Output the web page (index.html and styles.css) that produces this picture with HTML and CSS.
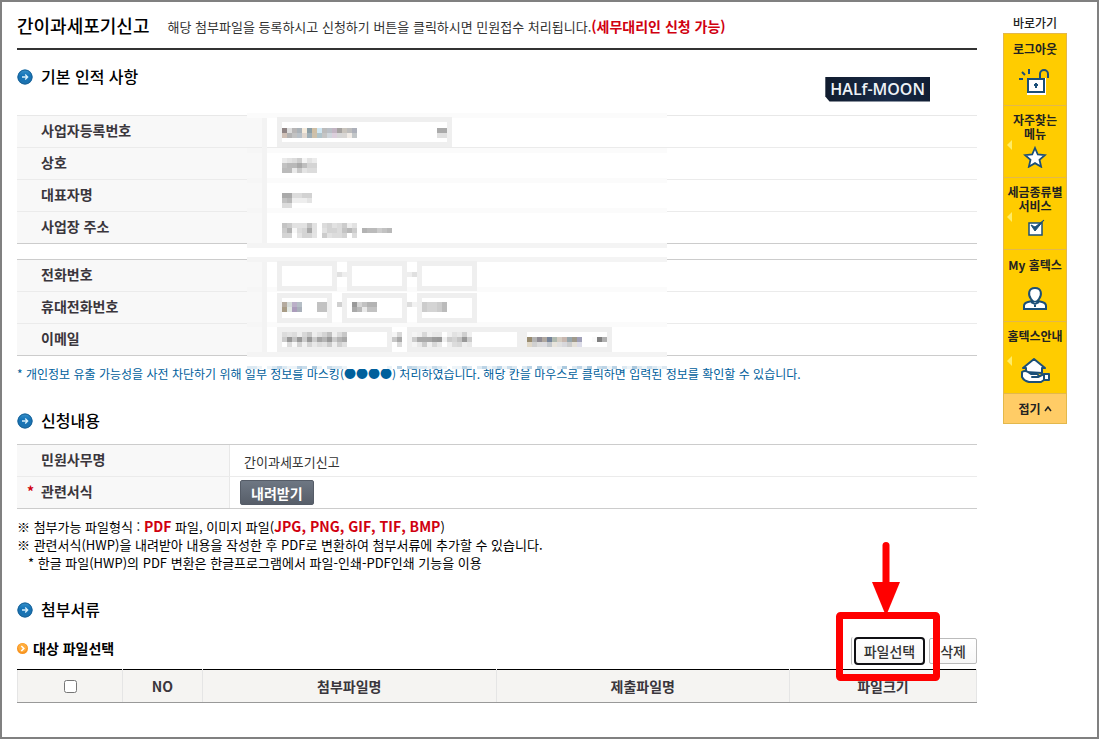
FILE: index.html
```html
<!DOCTYPE html>
<html lang="ko">
<head>
<meta charset="utf-8">
<title>간이과세포기신고</title>
<link rel="stylesheet" href="styles.css">
</head>
<body>
<svg class="defs" aria-hidden="true">
  <defs>
    <linearGradient id="blue" x1="0" y1="0" x2="0" y2="1"><stop offset="0" stop-color="#3a94cc"/><stop offset=".4" stop-color="#1574b8"/><stop offset="1" stop-color="#1d72ae"/></linearGradient>
    <symbol id="arrow" viewBox="0 0 16 16"><circle cx="8" cy="8" r="7.6" fill="url(#blue)"/><circle cx="8" cy="8" r="7" fill="none" stroke="#1c6296" stroke-width="1"/><path d="M5 8h5.5M8.2 5.5 10.7 8 8.2 10.5" fill="none" stroke="#d9f0fb" stroke-width="1.3"/></symbol>
  </defs>
</svg>
<div class="page">
  <main class="main">
    <header class="top">
      <h1>간이과세포기신고</h1>
      <p>해당 첨부파일을 등록하시고 신청하기 버튼을 클릭하시면 민원접수 처리됩니다.<strong>(세무대리인 신청 가능)</strong></p>
    </header>

    <div class="section-head">
      <svg class="bullet"><use href="#arrow"/></svg>
      <h2>기본 인적 사항</h2>
      <span class="brand">HALf-MOON</span>
    </div>

    <div class="form form-person">
      <svg class="mosaic" id="mask-person" width="420" height="135" viewBox="0 0 84 27" aria-hidden="true"></svg>
      <div class="row"><label class="label" for="bizno">사업자등록번호</label><div class="value"><select id="bizno" class="field w-175"></select></div></div>
      <div class="row"><span class="label">상호</span><div class="value"></div></div>
      <div class="row"><span class="label">대표자명</span><div class="value"></div></div>
      <div class="row"><span class="label">사업장 주소</span><div class="value"></div></div>
    </div>

    <div class="form form-contact">
      <svg class="mosaic" id="mask-contact" width="420" height="100" viewBox="0 0 84 20" aria-hidden="true"></svg>
      <div class="row"><label class="label" for="tel1">전화번호</label><div class="value phone"><input id="tel1" class="field w-60"><input class="field w-60" aria-label="전화번호 국번"><input class="field w-60" aria-label="전화번호 끝자리"></div></div>
      <div class="row"><label class="label" for="cell1">휴대전화번호</label><div class="value phone"><select id="cell1" class="field w-55"></select><input class="field w-65" aria-label="휴대전화번호 국번"><input class="field w-60" aria-label="휴대전화번호 끝자리"></div></div>
      <div class="row"><label class="label" for="mail1">이메일</label><div class="value mail"><input id="mail1" class="field w-115"><input class="field w-115" aria-label="이메일 도메인"><select class="field w-90" aria-label="이메일 도메인 선택"></select></div></div>
    </div>
    <p class="notice">* 개인정보 유출 가능성을 사전 차단하기 위해 일부 정보를 마스킹(●●●●) 처리하였습니다. 해당 칸을 마우스로 클릭하면 입력된 정보를 확인할 수 있습니다.
      <svg class="notice-mask" id="mask-notice" width="420" height="3" viewBox="0 0 84 1" preserveAspectRatio="none" aria-hidden="true"></svg></p>

    <div class="section-head spaced">
      <svg class="bullet"><use href="#arrow"/></svg>
      <h2>신청내용</h2>
    </div>
    <div class="form form-request">
      <div class="row"><span class="label">민원사무명</span><div class="value text">간이과세포기신고</div></div>
      <div class="row"><span class="label"><i class="req">*</i>관련서식</span><div class="value"><button class="download" type="button">내려받기</button></div></div>
    </div>
    <ul class="hints">
      <li>※ 첨부가능 파일형식 : <strong>PDF</strong> 파일, 이미지 파일(<strong>JPG, PNG, GIF, TIF, BMP</strong>)</li>
      <li>※ 관련서식(HWP)을 내려받아 내용을 작성한 후 PDF로 변환하여 첨부서류에 추가할 수 있습니다.</li>
      <li class="sub">* 한글 파일(HWP)의 PDF 변환은 한글프로그램에서 파일-인쇄-PDF인쇄 기능을 이용</li>
    </ul>

    <div class="section-head spaced">
      <svg class="bullet"><use href="#arrow"/></svg>
      <h2>첨부서류</h2>
    </div>
    <div class="toolbar">
      <h3><svg class="dot" viewBox="0 0 11 11"><circle cx="5.5" cy="5.5" r="5.5" fill="#f79421"/><circle cx="5.5" cy="4.6" r="4.3" fill="#ffac3b"/><path d="M4.3 3 6.8 5.5 4.3 8" fill="none" stroke="#fff" stroke-width="1.6"/></svg>대상 파일선택</h3>
      <span class="pick-wrap"><button class="btn pick" type="button">파일선택</button></span>
      <button class="btn" type="button">삭제</button>
      <svg class="marker" viewBox="0 0 106 142" aria-hidden="true"><rect x="4.5" y="75.5" width="97" height="62" rx="1" fill="none" stroke="#f00" stroke-width="7" stroke-linejoin="round"/><path d="M51 5.5V44" stroke="#f00" stroke-width="7" stroke-linecap="round"/><path d="M37 42h28L51 76z" fill="#f00"/></svg>
    </div>
    <table class="files">
      <colgroup><col class="c-check"><col class="c-no"><col><col><col class="c-size"></colgroup>
      <thead><tr><th><input type="checkbox" aria-label="전체 선택"></th><th>NO</th><th>첨부파일명</th><th>제출파일명</th><th>파일크기</th></tr></thead>
    </table>
  </main>

  <aside class="quick">
    <h2>바로가기</h2>
    <nav>
      <a href="#">로그아웃
        <svg width="32" height="28" viewBox="0 0 32 28" fill="none"><path d="M9 11h17v15H9z" fill="#fff" stroke="#fff" stroke-width="2"/><path d="M9 11h16v13H9z" fill="#fff" stroke="#1b4f78" stroke-width="2"/><path d="M21 11V6a4 4 0 0 1 8 0v4M10 6V1M6 7 3 4M4 11H0" stroke="#1b4f78" stroke-width="2"/><path d="M17 15v5M15 17h4" stroke="#1b4f78" stroke-width="2"/></svg></a>
      <a href="#" class="more"><span>자주찾는<br>메뉴</span>
        <svg width="24" height="22" viewBox="0 0 24 22"><path d="m12 2 2.8 6.5 7 .6-5.3 4.7 1.6 6.9-6.1-3.6-6.1 3.6 1.6-6.9L2.2 9.1l7-.6z" fill="#fff" stroke="#1b4f78" stroke-width="1.8"/></svg></a>
      <a href="#" class="more"><span>세금종류별<br>서비스</span>
        <svg width="22" height="22" viewBox="0 0 22 22"><path d="M5 5h13v12H5z" fill="#fff" stroke="#1b4f78" stroke-width="1.5"/><path d="m7 7 4 6L20 2l-9 7z" fill="#1b4f78" stroke="#1b4f78"/></svg></a>
      <a href="#">My 홈텍스
        <svg width="26" height="28" viewBox="0 0 26 28" fill="#fff" stroke="#1b4f78" stroke-width="2"><path d="M2 25v-3q0-3 4-4l4-1h6l4 1q4 1 4 4v3z"/><path d="M13 4c7 0 7 7 4 11-2 4-6 4-8 0C6 11 6 4 13 4z"/><path d="m9 18 4 2 4-2M13 19v4"/></svg></a>
      <a href="#" class="more">홈텍스안내
        <svg width="30" height="28" viewBox="0 0 30 28" fill="#fff" stroke="#1b4f78" stroke-width="2" stroke-linejoin="round"><path d="M6 16v-4H3L14 3l11 9h-3v5z"/><path d="M2 16q3-2 6 0l3 2h6q3 2 0 3h-5 6l6-3h5v6h-5l-3 2H9q-5-1-7-5z"/><path d="M24 18v6"/></svg></a>
      <button type="button" class="fold">접기 <svg width="8" height="6" viewBox="0 0 8 6"><path d="m1 5 3-4 3 4" fill="none" stroke="#222" stroke-width="1.5"/></svg></button>
    </nav>
  </aside>
</div>
<script src="mosaic.js"></script>
</body>
</html>
```

FILE: styles.css
```css
* { box-sizing: border-box; }
body, h1, h2, h3, p, ul { margin: 0; padding: 0; }
body {
  font-family: "Noto Sans CJK KR", "Liberation Sans", sans-serif;
  font-size: 13px;
  line-height: 18px;
  color: #333;
  background: #fff;
}
button, input, select { font: inherit; color: inherit; margin: 0; }
.defs { position: absolute; width: 0; height: 0; }

.page {
  display: flex;
  align-items: flex-start;
  gap: 26px;
  min-height: 100vh;
  padding: 11px 30px 32px 15px;
  border: 2px solid #808080;
}
.main { flex: 1; min-width: 0; }

.top {
  display: flex;
  align-items: center;
  gap: 18px;
  padding-bottom: 11px;
  border-bottom: 2px solid #333;
}
.top h1 { font-size: 18px; line-height: 24px; font-weight: 500; color: #000; }
.top p { padding-top: 3px; }
.top strong { font-size: 14px; color: #d0000f; }

.section-head { display: flex; align-items: center; gap: 8px; height: 24px; margin-top: 15px; }
.section-head.spaced { margin-top: 26px; }
.section-head h2 { padding-bottom: 2px; font-size: 16px; line-height: 22px; font-weight: 500; color: #000; }
.bullet { width: 16px; height: 16px; }
.brand {
  margin: 24px 47px 0 auto;
  padding: 0 5px;
  font: 600 16px/25px "Open Sans", sans-serif;
  color: #eef2f6;
  background: linear-gradient(90deg, #111c2e, #182a47 60%, #101d33);
  clip-path: polygon(0 0, 100% 0, 100% 100%, 4% 100%, 0 80%);
}

.form { position: relative; border-top: 1px solid #ccc; border-bottom: 1px solid #ccc; }
.form-person { margin-top: 26px; border-top-color: #e8e8e8; }
.form-contact { margin-top: 15px; }
.form-request { margin-top: 11px; }
.row { display: flex; min-height: 32px; border-bottom: 1px solid #ebebeb; }
.row:last-child { border-bottom: 0; min-height: 31px; }
.label {
  position: relative;
  flex: none;
  width: 250px;
  padding: 3px 0 6px 24px;
  font-size: 14px;
  line-height: 22px;
  font-weight: 700;
  color: #3a363c;
  background: #f8f8f8;
}
.form-request .label { width: 213px; border-right: 1px solid #e8e8e8; }
.value { display: flex; align-items: center; padding-left: 10px; }
.value.text { padding: 2px 0 0 14px; }
.req { position: absolute; left: 10px; font-style: normal; color: #d0000f; }

.field {
  position: relative;
  z-index: 1;
  height: 30px;
  padding: 0;
  border: 5px solid #efefef;
  border-radius: 0;
  background: transparent;
  appearance: none;
}
.w-55 { width: 55px; }
.w-60 { width: 60px; }
.w-65 { width: 65px; }
.w-90 { width: 90px; }
.w-115 { width: 115px; }
.w-175 { width: 175px; }
.phone { gap: 10px; }
.mail .field { height: 25px; }
.mail .field:nth-child(2) { margin-left: 15px; }
.mosaic { position: absolute; left: 230px; top: -3px; pointer-events: none; z-index: 1; }

.notice { position: relative; margin-top: 9px; font-size: 12px; color: #00609c; }
.notice-mask { position: absolute; left: 230px; top: 1px; }

.download {
  height: 25px;
  padding: 0 10px;
  border: 1px solid #555c67;
  border-radius: 2px;
  font-size: 14px;
  line-height: 20px;
  font-weight: 700;
  color: #fff;
  background: linear-gradient(#6e7783, #575e69);
}
.hints { margin-top: 8px; list-style: none; color: #000; }
.hints strong { color: #d0000f; font-size: 14px; }
.hints .sub { padding-left: 11px; }

.toolbar { position: relative; display: flex; align-items: center; margin-top: 15px; }
.toolbar h3 {
  display: flex;
  flex: 1;
  align-items: center;
  gap: 5px;
  padding-bottom: 6px;
  font-size: 14px;
  line-height: 22px;
  font-weight: 700;
  color: #000;
}
.dot { width: 11px; height: 11px; }
.btn {
  height: 26px;
  padding: 0 10px;
  border: 1px solid #bbb;
  border-radius: 2px;
  font-size: 14px;
  line-height: 20px;
  font-weight: 500;
  background: linear-gradient(#fff, #f7f7f7);
}
.pick-wrap { padding-left: 2px; margin-right: 4px; border-left: 1px solid #bbb; border-radius: 2px; }
.pick { display: block; height: 28px; padding: 0 8px; border: 2px solid #101014; border-radius: 4px; }
.marker { position: absolute; right: 36px; bottom: -17px; width: 106px; height: 142px; z-index: 2; pointer-events: none; }

.files { width: 100%; margin-top: 4px; border-collapse: collapse; table-layout: fixed; border-top: 1px solid #000; }
.files th {
  height: 33px;
  padding: 0;
  font-size: 14px;
  line-height: 20px;
  font-weight: 700;
  color: #3a363c;
  background: #f5f4f2;
  border: 1px solid #e5e5e5;
  border-top: 1px solid #000;
  border-bottom: 1px solid #999;
}
.files input { display: block; width: 13px; height: 13px; margin: 0 auto; }
.c-check { width: 105px; }
.c-no { width: 80px; }
.c-size { width: 187px; }

.quick { flex: none; width: 64px; }
.quick h2 { font-size: 12px; line-height: 20px; font-weight: 500; text-align: center; color: #222; }
.quick nav { border: 1px solid #e3b84c; }
.quick a {
  position: relative;
  display: flex;
  flex-direction: column;
  align-items: center;
  justify-content: space-between;
  min-height: 72px;
  padding: 8px 0 9px;
  font-size: 12px;
  line-height: 14px;
  font-weight: 700;
  text-align: center;
  text-decoration: none;
  color: #222;
  background: #fc0;
  border-bottom: 1px solid #e3b84c;
}
.quick a.more { padding-top: 7px; }
.quick a.more::before {
  content: "";
  position: absolute;
  left: 3px;
  top: 34px;
  border: 5px solid transparent;
  border-left: 0;
  border-right-color: #ffec66;
}
.fold {
  display: flex;
  align-items: center;
  justify-content: center;
  gap: 3px;
  width: 100%;
  height: 29px;
  padding: 0;
  border: 0;
  font-size: 12px;
  line-height: 14px;
  font-weight: 700;
  color: #222;
  background: #fc6;
}
```

FILE: mosaic.js
```js
// Draws masked values as square cells. Each run is [column, row, colours];
// two-digit colours are greys, "--" leaves a cell empty.
function paint(id, bands, runs) {
  const svg = document.getElementById(id);
  const add = (x, y, w, h, fill) => {
    const r = document.createElementNS("http://www.w3.org/2000/svg", "rect");
    for (const [k, v] of Object.entries({ x, y, width: w, height: h, fill })) r.setAttribute(k, v);
    r.setAttribute("shape-rendering", "crispEdges");
    svg.appendChild(r);
  };
  bands.forEach(b => add(...b));
  runs.forEach(([x, y, colours]) => colours.split(" ").forEach((c, i) => {
    if (c !== "--") add(x + i, y, 1, 1, "#" + (c.length === 2 ? c + c + c : c));
  }));
}

paint("mask-person", [
  [0, 0, 84, 1, "#fbfbfb"], [0, 7, 84, 1, "#fbfbfb"], [0, 13, 84, 1, "#fbfbfb"], [0, 19, 84, 1, "#fbfbfb"],
  [0, 7, 4, 1, "#f6f6f6"], [0, 13, 4, 1, "#f6f6f6"], [0, 19, 4, 1, "#f6f6f6"],
  [3, 1, 1, 25, "#f3f3f3"], [0, 26, 84, 1, "#f4f4f4"]
], [
  [7, 3, "8f8484 dc b8b6b6 aab2b8 f5ebdc 8c9ea5 cfbfa5 cfe6f2 bc babfc6 c3b5c3 a5a2a0 c9c4bd bd adb0ba"],
  [7, 4, "cfc0b6 b3 c2 b9c1c8 dfd6ce a0b0b8 cdc1ac b0c4ca c5 cfd6dc dccfdc d6 d8d6d4 f0ebe6 c2c6c8"],
  [38, 3, "aa aa"], [38, 4, "e0 e0"],
  [7, 9, "eb e3 dc cd f5 e3 ec"], [7, 10, "c2 b9 b9 a9 bf d4 d4"], [7, 11, "bb bb ea c9 e4 dc dc"],
  [7, 16, "aa aa dc dc d2 d2"], [7, 17, "c2 b9 ee ee ee e4"], [7, 18, "dc dc"],
  [7, 22, "c4 cc e2 e2 e2 c4 e2 -- dc d4 e2 dc cc ee e2"],
  [7, 23, "cc b3 f8 dc d4 a9 e2 -- e2 d4 d4 dc c4 b9 cc -- b3 bb bb cc c2 b9"],
  [7, 24, "d4 d4 -- e4 d4 d4 e4 -- cc e2 dc dc d4 -- dc"]
]);

paint("mask-contact", [
  [0, 0, 84, 1, "#f4f4f4"], [0, 6, 84, 1, "#fbfbfb"], [0, 13, 84, 1, "#fbfbfb"],
  [0, 6, 4, 1, "#f6f6f6"], [0, 13, 4, 1, "#f6f6f6"],
  [3, 1, 1, 18, "#f3f3f3"], [0, 19, 84, 1, "#f4f4f4"]
], [
  [18, 3, "e0 ee"], [32, 3, "ee e0"],
  [7, 9, "b5ab9f d5dbd8 bbb0c8 b5bec6 -- -- -- c2 c2"], [7, 10, "a89c86 e2e8e4 ab9cbb a9b0ba -- -- -- c2 c2"],
  [18, 9, "d0"], [32, 9, "dc f2"],
  [21, 9, "99 d4 c2 b3 b3"], [21, 10, "a9 b9 ea c2 c2"],
  [35, 9, "cc d4 d4 cc bb"], [35, 10, "cc d4 d4 cc bb"],
  [7, 15, "dc e2 dc ee d8 c8 ee e2 d4 c0 f0 dc c8"],
  [7, 16, "cc 99 c4 99 cc 99 cc a5 b5 99 cc b5 a9"],
  [7, 17, "-- dc f8 d4 f0 d4 e8 dc e2 cc ee d0 e0"],
  [29, 15, "f5 d8"], [29, 16, "c8 aa"], [29, 17, "-- dc"],
  [33, 15, "f5 f0 d8 f0 e8 e8 -- f0 e2 e8 d0 f0"],
  [33, 16, "cc aa aa a9 9c 99 f0 cc d4 c4 99 cc"],
  [33, 17, "f5 e8 cc f0 d8 e8 -- ee dc d8 ee e8"],
  [56, 16, "998c70 b3 908c94 b0a8a0 76849a b0bab0 d4ccc2 c8b8b0 98a6ac a09a8c a0a0b8 -- -- fa 80 b0"],
  [56, 17, "e0d8c8 d0 dc dcdce0 c4c8cc e8e4dc e0 d8d8dc cc e4e0d8 dcdce8"]
]);

paint("mask-notice", [[0, 0, 84, 1, "#fff"]], [
  [0, 0, "dce9f2 dce9f2 edf4f8 -- edf4f8 dce9f2 bcd4e6 dce9f2 edf4f8 edf4f8 bcd4e6 c8dcea -- acc9de edf4f8 -- c8dcea dce9f2 dce9f2 edf4f8"],
  [28, 0, "edf4f8 -- bcd4e6 -- bcd4e6 c8dcea dce9f2 dce9f2 edf4f8 c8dcea dce9f2 edf4f8 -- edf4f8 edf4f8 bcd4e6 dce9f2 -- dce9f2 bcd4e6 edf4f8 dce9f2 bcd4e6 edf4f8 c8dcea dce9f2"],
  [55, 0, "dce9f2 bcd4e6 -- acc9de edf4f8 dce9f2 -- edf4f8 acc9de -- dce9f2 bcd4e6 edf4f8 acc9de -- c8dcea bcd4e6 edf4f8 bcd4e6 -- dce9f2 edf4f8 acc9de dce9f2 edf4f8 c8dcea dce9f2 edf4f8 dce9f2"]
]);
```
